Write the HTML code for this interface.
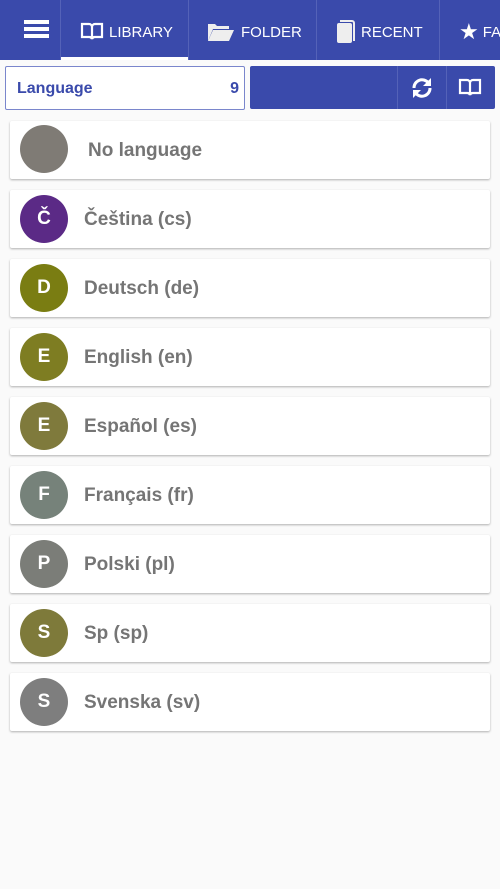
<!DOCTYPE html><html><head><style>
body{margin:0;width:500px;height:889px;background:#fafafa;font-family:"Liberation Sans",sans-serif;position:relative;overflow:hidden}
.hdr{position:absolute;left:0;top:0;width:500px;height:60px;background:#3a4aab}
.tab{position:absolute;top:2px;height:60px;color:#fff;font-size:15px;display:flex;align-items:center;box-sizing:border-box}
.sep{position:absolute;top:0;width:1px;height:60px;background:#5462b8}
.card{position:absolute;left:10px;width:480px;height:58px;background:#fff;box-shadow:0 1px 2px rgba(0,0,0,.3);border-radius:2px}
.c{position:absolute;left:10px;top:5px;width:48px;height:48px;border-radius:50%;color:#fff;font-weight:bold;font-size:19px;text-align:center;line-height:48px}
.t{position:absolute;left:74px;top:1px;line-height:58px;font-size:19px;font-weight:bold;color:#757575}
</style></head><body>
<div class="hdr">
<div style="position:absolute;left:24px;top:20px;width:25px;height:4px;background:#fff;box-shadow:0 7px 0 #fff,0 14px 0 #fff"></div>
<div class="sep" style="left:60px"></div><div class="sep" style="left:188px"></div><div class="sep" style="left:316px"></div><div class="sep" style="left:439px"></div>
<div class="tab" style="left:80px"><svg width="24" height="20" viewBox="0 0 24 20" style="margin-right:5px"><path d="M2 2h7a3 3 0 0 1 3 3v12a3 3 0 0 0-3-2H2zM22 2h-7a3 3 0 0 0-3 3v12a3 3 0 0 1 3-2h7z" fill="none" stroke="#fff" stroke-width="2.2"/></svg>LIBRARY</div>
<div style="position:absolute;left:61px;top:57px;width:127px;height:3px;background:#fff"></div>
<div class="tab" style="left:207px"><svg width="28" height="20" viewBox="0 0 28 20" style="margin-right:6px"><path d="M1 2h7l2 2h12v3H6L1 19z" fill="#eee"/><path d="M6 8h21l-5 11H1z" fill="#eee"/></svg>FOLDER</div>
<div class="tab" style="left:336px"><svg width="20" height="24" viewBox="0 0 20 24" style="margin-right:5px"><rect x="1" y="3" width="15" height="20" rx="2" fill="#eee"/><path d="M4 1h12a2 2 0 0 1 2 2v18" fill="none" stroke="#eee" stroke-width="2"/></svg>RECENT</div>
<div class="tab" style="left:459px"><span style="font-size:22px;margin-right:4px">★</span>FA</div>
</div>
<div style="position:absolute;left:5px;top:66px;width:238px;height:42px;border:1px solid #7a86cc;border-radius:2px;background:#fff;color:#3a4aab;font-weight:bold;font-size:16px;line-height:44px"><span style="margin-left:11px">Language</span><span style="position:absolute;right:5px">9</span></div>
<div style="position:absolute;left:250px;top:66px;width:245px;height:43px;background:#3a4aab;border-radius:2px">
<div style="position:absolute;left:147px;top:0;width:1px;height:43px;background:#5462b8"></div>
<div style="position:absolute;left:196px;top:0;width:1px;height:43px;background:#5462b8"></div>
<svg style="position:absolute;left:159px;top:9px" width="26" height="26" viewBox="0 0 26 26"><path d="M5 13a8 8 0 0 1 14-5.5M21 13a8 8 0 0 1-14 5.5" fill="none" stroke="#fff" stroke-width="3"/><path d="M22 3v8h-8zM4 23v-8h8z" fill="#fff"/></svg>
<svg style="position:absolute;left:208px;top:12px" width="24" height="20" viewBox="0 0 24 20"><path d="M2 2h7a3 3 0 0 1 3 3v12a3 3 0 0 0-3-2H2zM22 2h-7a3 3 0 0 0-3 3v12a3 3 0 0 1 3-2h7z" fill="none" stroke="#fff" stroke-width="2.2"/></svg>
</div>
<div class="card" style="top:121px"><div class="c" style="background:#7f7b75;top:4px"></div><div class="t" style="left:78px">No language</div></div>
<div class="card" style="top:190px"><div class="c" style="background:#5b2a86">Č</div><div class="t">Čeština (cs)</div></div>
<div class="card" style="top:259px"><div class="c" style="background:#7a7d12">D</div><div class="t">Deutsch (de)</div></div>
<div class="card" style="top:328px"><div class="c" style="background:#7e7d22">E</div><div class="t">English (en)</div></div>
<div class="card" style="top:397px"><div class="c" style="background:#7f7a3c">E</div><div class="t">Español (es)</div></div>
<div class="card" style="top:466px"><div class="c" style="background:#76827a">F</div><div class="t">Français (fr)</div></div>
<div class="card" style="top:535px"><div class="c" style="background:#7b7d78">P</div><div class="t">Polski (pl)</div></div>
<div class="card" style="top:604px"><div class="c" style="background:#7e7a3a">S</div><div class="t">Sp (sp)</div></div>
<div class="card" style="top:673px"><div class="c" style="background:#7e7e7e">S</div><div class="t">Svenska (sv)</div></div>
</body></html>
